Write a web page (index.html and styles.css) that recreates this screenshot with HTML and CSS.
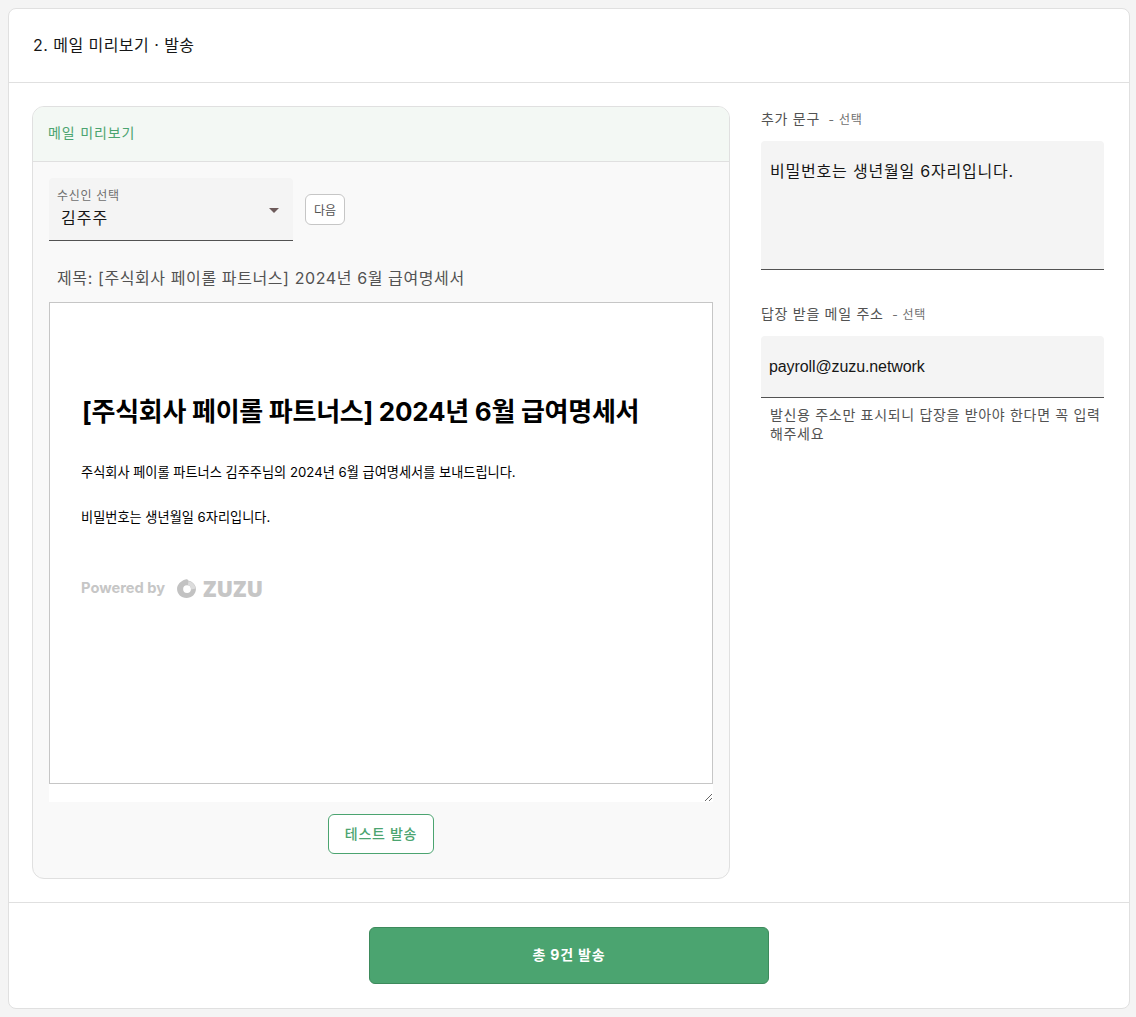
FILE: index.html
```html
<!DOCTYPE html>
<html lang="ko">
<head>
<meta charset="utf-8">
<title>메일 미리보기 · 발송</title>
<link rel="stylesheet" href="styles.css">
</head>
<body>
<main class="card">
  <header class="card-head">2. 메일 미리보기 · 발송</header>
  <div class="card-body">
    <section class="preview">
      <div class="preview-head">메일 미리보기</div>
      <div class="preview-body">
        <div class="recipient-row">
          <div class="select">
            <span class="select-label">수신인 선택</span>
            <span class="select-value">김주주</span>
            <span class="select-arrow"></span>
          </div>
          <button class="btn-next" type="button">다음</button>
        </div>
        <div class="subject">제목: [주식회사 페이롤 파트너스] 2024년 6월 급여명세서</div>
        <div class="mail-resize">
          <div class="mail-frame">
            <h1 class="mail-title">[주식회사 페이롤 파트너스] 2024년 6월 급여명세서</h1>
            <p class="mail-text">주식회사 페이롤 파트너스 김주주님의 2024년 6월 급여명세서를 보내드립니다.</p>
            <p class="mail-text">비밀번호는 생년월일 6자리입니다.</p>
            <div class="powered">
              <span class="powered-by">Powered by</span>
              <svg class="zuzu-mark" viewBox="0 0 20 20" aria-hidden="true">
                <path class="mark-dark" fill-rule="evenodd" d="M9 1.500c1.200-.6 2.200 0 2.600.8C15.500 3 19 6.300 19 10.500c0 4.900-4 8.500-9 8.500s-9-3.600-9-8.500C1 6.300 4.500 2.800 9 1.500ZM10.500 6.800a3.700 3.700 0 1 0 3.700 3.700 3.700 3.700 0 0 0-3.700-3.700Z"/>
                <path class="mark-light" d="M11.800 3.200c3.500.6 6.400 3.300 6.800 6.800l-4 1c-.2-2-1.600-3.900-3.200-4.500Z"/>
              </svg>
              <span class="zuzu-word">ZUZU</span>
            </div>
          </div>
        </div>
        <div class="test-row"><button class="btn-test" type="button">테스트 발송</button></div>
      </div>
    </section>
    <aside class="options">
      <div class="field field-message">
        <div class="field-label">추가 문구 <small>- 선택</small></div>
        <div class="textarea">비밀번호는 생년월일 6자리입니다.</div>
      </div>
      <div class="field">
        <div class="field-label">답장 받을 메일 주소 <small>- 선택</small></div>
        <div class="input">payroll@zuzu.network</div>
        <p class="helper">발신용 주소만 표시되니 답장을 받아야 한다면 꼭 입력 해주세요</p>
      </div>
    </aside>
  </div>
  <footer class="card-foot"><button class="btn-send" type="button">총 9건 발송</button></footer>
</main>
</body>
</html>
```
FILE: styles.css
```css
* { box-sizing: border-box; }
html, body { height: 100%; }
body {
  margin: 0;
  padding: 8px 6px 8px 8px;
  background: #f4f4f4;
  font-family: Inter, "Noto Sans CJK KR", "Liberation Sans", sans-serif;
  color: #161616;
}
.card {
  height: 1001px;
  background: #fff;
  border: 1px solid #e0e0e0;
  border-radius: 8px;
  display: flex;
  flex-direction: column;
}
.card-head {
  height: 74px;
  padding: 0 24px 3px;
  display: flex;
  align-items: center;
  font-size: 16px;
  letter-spacing: .45px;
  border-bottom: 1px solid #e0e0e0;
}
.card-body {
  flex: 1;
  display: flex;
  gap: 31px;
  padding: 23px 25px 23px 23px;
}
.preview {
  width: 698px;
  background: #f9f9f9;
  border: 1px solid #e0e0e0;
  border-radius: 12px;
  overflow: hidden;
}
.preview-head {
  height: 55px;
  padding: 0 15px 4px;
  display: flex;
  align-items: center;
  background: #f3f8f4;
  border-bottom: 1px solid #e0e0e0;
  color: #4ba470;
  font-size: 14px;
  letter-spacing: .85px;
}
.preview-body { padding: 16px 16px 0; }
.recipient-row { display: flex; align-items: center; gap: 12px; }
.select {
  position: relative;
  width: 244px;
  height: 63px;
  padding: 10px 8px 0;
  background: #f4f4f4;
  border-bottom: 1px solid #525252;
  border-radius: 4px 4px 0 0;
  display: flex;
  flex-direction: column;
}
.select-label { font-size: 12px; line-height: 16px; color: #6f6f6f; letter-spacing: .7px; }
.select-value { font-size: 16px; line-height: 24px; padding-left: 4px; margin-top: 2px; letter-spacing: 1px; }
.select-arrow {
  position: absolute;
  right: 14px;
  top: 30px;
  border-style: solid;
  border-width: 5px 5px 0;
  border-color: #6d5a5a transparent transparent;
}
.btn-next {
  width: 40px;
  height: 31px;
  padding: 0;
  background: #fff;
  border: 1px solid #c6c6c6;
  border-radius: 6px;
  font: inherit;
  font-size: 12px;
  color: #525252;
}
.subject {
  padding: 25px 8px 12px;
  height: 61px;
  font-size: 16px;
  line-height: 24px;
  letter-spacing: .6px;
  color: #525252;
}
.mail-resize {
  width: 664px;
  height: 500px;
  background: #fff;
  resize: both;
  overflow: hidden;
}
.mail-frame {
  height: 482px;
  padding: 91px 31px 0 32px;
  border: 1px solid #c6c6c6;
}
.mail-title {
  margin: 0 0 32px;
  font-size: 26px;
  line-height: 36px;
  letter-spacing: -.27px;
  font-weight: 700;
  color: #000;
}
.mail-text {
  margin: 0 0 24px -1px;
  font-size: 13.2px;
  line-height: 21px;
  color: #000;
}
.powered {
  display: flex;
  align-items: center;
  margin: 45px 0 0 -1px;
  color: #c6c6c6;
  font-weight: 700;
}
.powered-by { font-size: 14.700px; width: 95px; }
.zuzu-mark { width: 21px; height: 21px; }
.mark-dark { fill: #c2c2c2; }
.mark-light { fill: #dcdcdc; }
.zuzu-word { font-size: 22px; margin-left: 6px; font-family: "Open Sans", sans-serif; font-weight: 800; }
.test-row { display: flex; justify-content: center; padding-top: 12px; }
.btn-test {
  width: 106px;
  height: 40px;
  padding: 0 0 2px;
  background: #fff;
  border: 1px solid #4ba470;
  border-radius: 6px;
  color: #4ba470;
  font: inherit;
  font-size: 14px;
  font-weight: 500;
  letter-spacing: .7px;
}
.options { width: 343px; }
.field-message { margin-bottom: 31px; }
.field-label {
  height: 35px;
  padding-top: 1px;
  font-size: 14px;
  line-height: 24px;
  letter-spacing: .7px;
  color: #525252;
}
.field-label small { font-size: 12px; color: #6f6f6f; margin-left: 4px; letter-spacing: .7px; }
.textarea, .input {
  background: #f4f4f4;
  border-bottom: 1px solid #525252;
  border-radius: 4px 4px 0 0;
}
.textarea { height: 129px; padding: 20px 9px; line-height: 20px; font-size: 16px; letter-spacing: .8px; }
.input { height: 62px; padding: 21px 8px; line-height: 20px; font-family: "Liberation Sans", sans-serif; font-size: 16px; letter-spacing: -.1px; }
.helper {
  margin: 7px 0 0;
  padding-left: 9px;
  font-size: 14px;
  line-height: 19px;
  letter-spacing: .68px;
  word-break: keep-all;
  color: #525252;
}
.card-foot {
  height: 106px;
  padding-top: 24px;
  border-top: 1px solid #e0e0e0;
  display: flex;
  justify-content: center;
}
.btn-send {
  width: 400px;
  height: 57px;
  padding: 0 0 3px;
  background: #4ba470;
  border: 1px solid #3d8a5c;
  border-radius: 6px;
  color: #fff;
  font: inherit;
  font-size: 14px;
  font-weight: 700;
  letter-spacing: .8px;
}
```
